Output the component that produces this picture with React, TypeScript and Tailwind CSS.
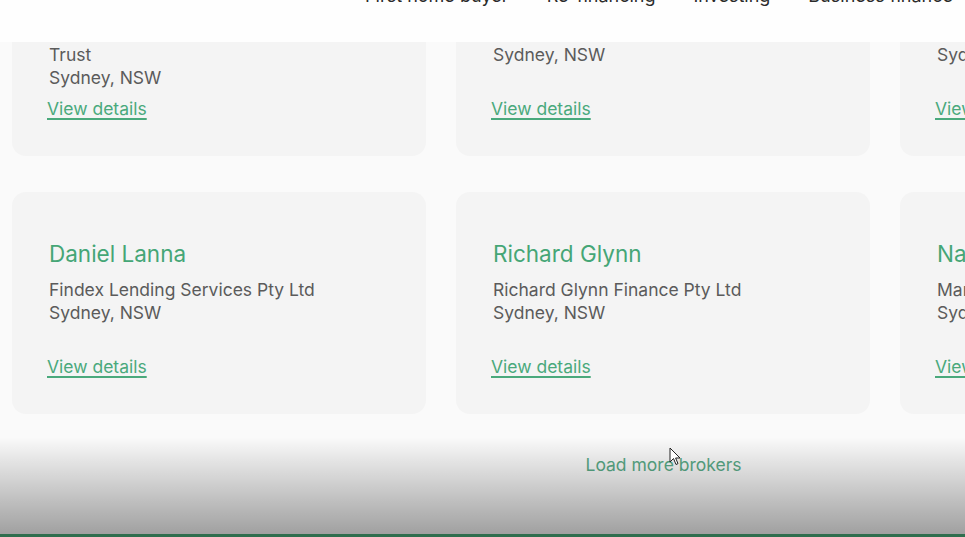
import { Fragment } from 'react'

type Broker = {
  name: string
  company: string[]
  city: string
}

const rows: Broker[][] = [
  [
    { name: 'Andrew Hennessy', company: ['Hennessy Finance Pty Ltd atf Hennessy', 'Trust'], city: 'Sydney, NSW' },
    { name: 'Michael Tran', company: ['MT Finance Solutions Pty Ltd'], city: 'Sydney, NSW' },
    { name: 'Sarah Kelly', company: ['Kelly Home Loans Pty Ltd'], city: 'Sydney, NSW' },
  ],
  [
    { name: 'Daniel Lanna', company: ['Findex Lending Services Pty Ltd'], city: 'Sydney, NSW' },
    { name: 'Richard Glynn', company: ['Richard Glynn Finance Pty Ltd'], city: 'Sydney, NSW' },
    { name: 'Nathan Morris', company: ['Marque Lending Pty Ltd'], city: 'Sydney, NSW' },
  ],
]

const nav = ['First home buyer', 'Re-financing', 'Investing', 'Business finance']

function BrokerCard({ broker }: { broker: Broker }) {
  return (
    <div className="flex h-[222px] w-[414px] shrink-0 flex-col rounded-[14px] bg-[#f4f4f4] pb-[36px] pl-[37px] pr-4 pt-[50px]">
      <h3 className="text-[22.5px] leading-[24px] text-[#45a676]">{broker.name}</h3>
      <p className="mt-3 whitespace-nowrap text-[17.5px] leading-[23px] text-[#5b5b5b]">
        {broker.company.map((line, i) => (
          <Fragment key={i}>
            {line}
            <br />
          </Fragment>
        ))}
        {broker.city}
      </p>
      <a className="-ml-[2px] mt-auto text-[17.5px] leading-[23px] text-[#4aa97c] underline decoration-[1.5px] underline-offset-[3px]">
        View details
      </a>
    </div>
  )
}

export default function App() {
  return (
    <div
      className="relative h-[537px] w-[965px] overflow-hidden bg-[#fafafa]"
      style={{ fontFamily: 'Inter, "Noto Sans", sans-serif' }}
    >
      {/* Sticky header, scrolled so only the bottom of the nav shows */}
      <header className="absolute inset-x-0 top-0 z-10 h-[42px] bg-[#fefefe]">
        <nav className="-mt-[16px] flex justify-end gap-[38px] pr-[12px] text-[18px] leading-[23px] text-[#2a2a2a]">
          {nav.map((item) => (
            <span key={item}>{item}</span>
          ))}
        </nav>
      </header>

      {/* Broker grid */}
      <main className="-mt-[66px] flex flex-col gap-[36px] pl-[12px]">
        {rows.map((row, r) => (
          <div key={r} className="flex gap-[30px]">
            {row.map((b) => (
              <BrokerCard key={b.name} broker={b} />
            ))}
          </div>
        ))}
        <div className="mt-[3px] flex justify-center pl-[350px]">
          <button className="text-[17.5px] leading-[23px] text-[#5aab88]">Load more brokers</button>
        </div>
      </main>

      {/* Video player shade + progress bar */}
      <div className="pointer-events-none absolute inset-x-0 bottom-0 h-[100px] bg-linear-to-b from-black/0 to-black/[0.37]" />
      <div className="absolute inset-x-0 bottom-0 h-[3px] bg-[#2f6e4e]" />

      {/* Mouse pointer */}
      <svg className="absolute left-[669px] top-[447px]" width="12" height="19" viewBox="0 0 12 19">
        <path d="M1 1 L1 15 L4.5 11.5 L7 17.5 L9 16.6 L6.6 11 L11 11 Z" fill="#fff" stroke="#222" strokeWidth="1" strokeLinejoin="round" />
      </svg>
    </div>
  )
}
